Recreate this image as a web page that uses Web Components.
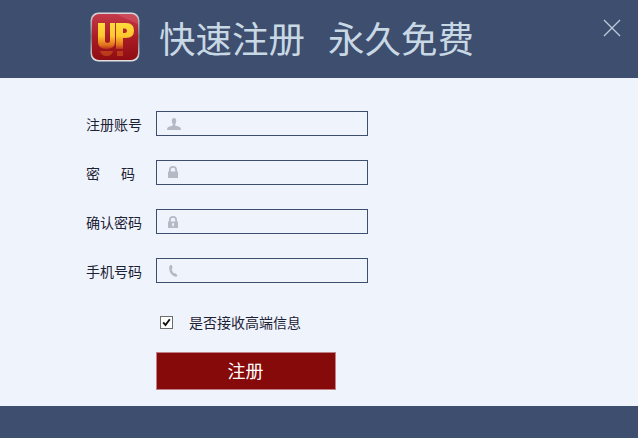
<!DOCTYPE html>
<html lang="zh"><head><meta charset="utf-8">
<style>
html,body{margin:0;padding:0;width:638px;height:438px;overflow:hidden;background:#eff3fb;font-family:"Noto Sans CJK SC","Liberation Sans",sans-serif}
</style></head><body>
<reg-app></reg-app>
<script>
class RegHeader extends HTMLElement{constructor(){super();this.attachShadow({mode:'open'}).innerHTML=`
<style>
:host{display:flex;flex:none;align-items:center;height:78px;background:#3e4e6e;padding-left:90px;box-sizing:border-box;position:relative}
.t{display:flex;gap:23px;margin-left:19px;font-size:36.5px;line-height:50px;color:#c8d8e4;margin-top:-3px}
svg{display:block}
.x{position:absolute;left:603px;top:19px}
.logo{margin-top:-4px}
</style>
<svg class="logo" width="50" height="50" viewBox="0 0 50 50">
<defs>
<linearGradient id="b" x1="0" y1="0" x2="0" y2="1"><stop offset="0" stop-color="#c43a4a"/><stop offset=".5" stop-color="#ab1c26"/><stop offset="1" stop-color="#8e0c12"/></linearGradient>
<linearGradient id="r" x1="0" y1="0" x2="0" y2="1"><stop offset="0" stop-color="#d8d8dc"/><stop offset=".5" stop-color="#77777c"/><stop offset="1" stop-color="#e4e4e6"/></linearGradient>
<linearGradient id="y" gradientUnits="userSpaceOnUse" x1="0" y1="11" x2="0" y2="37"><stop offset="0" stop-color="#ffdc3c"/><stop offset=".5" stop-color="#fcc82e"/><stop offset=".85" stop-color="#e2701e"/><stop offset="1" stop-color="#b8301c"/></linearGradient>
</defs>
<rect x=".5" y=".5" width="49" height="49" rx="8" fill="url(#r)"/>
<rect x="2" y="2" width="46" height="46" rx="7" fill="url(#b)"/>
<path d="M9 2h32a7 7 0 0 1 7 7v3L26 2z" fill="#d96a78" opacity=".4"/>
<path d="M8 11h7v18q0 2 2.500 2t2.500-2V11h5v19q0 7-8.500 7T8 30z" fill="url(#y)"/>
<path d="M26 11h10q8 0 8 7.500T36 26h-3v11h-7zM33 16.500v4.500h1.500q2.500 0 2.500-2.250t-2.500-2.250z" fill="url(#y)" fill-rule="evenodd"/>
<path d="M10 39h13q-1 5-6.500 5t-6.500-5zM27 39h6v5h-6z" fill="#e0641e" opacity=".5"/>
</svg>
<div class="t"><span>快速注册</span><span>永久免费</span></div>
<svg class="x" width="18" height="18" viewBox="0 0 18 18"><path d="M1 1L17 17M17 1L1 17" stroke="#bccbdc" stroke-width="1.300" fill="none"/></svg>`}}
customElements.define('reg-header',RegHeader);

const ICONS={
user:'<path d="M8 2q2.200 0 2.200 2.800 0 2-1 3.400v1.300l4.500 1.600q1.300.5 1.300 2.900H1q0-2.400 1.300-2.900l4.500-1.600V8.200q-1-1.400-1-3.400Q5.800 2 8 2z"/>',
lock:'<path fill-rule="evenodd" d="M3 6.500V5a4 4 0 0 1 8 0v1.500h1V13H2V6.500zM4.800 6.500h4.400V5a2.200 2.200 0 0 0-4.400 0z"/>',
lockh:'<path fill-rule="evenodd" d="M3 7.500V6a4 4 0 0 1 8 0v1.500h1V14H2V7.500zM4.800 7.500h4.400V6a2.200 2.200 0 0 0-4.400 0zM7 9a1.100 1.100 0 0 0-.6 2v1.500h1.200V11A1.100 1.100 0 0 0 7 9z"/>',
phone:'<path d="M4.200 2L5.800 2l.8 3-1 .9q.3 2.500 2.300 4.600l1.200-.5L11.500 12.200 10.500 13.800Q8 14 5.600 11.400T3.100 5.200Q3.100 3.200 4.200 2z"/>'};
class RegField extends HTMLElement{constructor(){super();const a=this.getAttribute('icon');this.attachShadow({mode:'open'}).innerHTML=`
<style>
:host{display:flex;align-items:center;height:25px}
.l{width:56px;margin-right:14px;font-size:14px;line-height:20px;color:#1c2236;display:flex;justify-content:flex-start;padding-top:1px}
.b{width:212px;height:25px;box-sizing:border-box;border:1px solid #3e4e6e;display:flex;align-items:center;padding-left:9px;background:#eff3fb}
svg{display:block;fill:#b5b9c6}
</style>
<div class="l"><slot></slot></div>
<div class="b"><svg width="16" height="15" viewBox="0 0 16 15">${ICONS[a]}</svg></div>`}}
customElements.define('reg-field',RegField);

class RegCheck extends HTMLElement{constructor(){super();this.attachShadow({mode:'open'}).innerHTML=`
<style>
:host{display:flex;align-items:center;height:13px;margin-left:4px}
.c{width:13px;height:13px;box-sizing:border-box;border:1px solid #6d6d6d;background:#fff;margin-right:16px}
svg{display:block}
span{font-size:14px;line-height:18px;color:#1c2236;margin-top:-2px}
</style>
<div class="c"><svg width="11" height="11" viewBox="0 0 11 11"><path d="M2.200 5.300L4.500 8 8.800 2.200" stroke="#111" stroke-width="1.900" fill="none"/></svg></div>
<span><slot></slot></span>`}}
customElements.define('reg-check',RegCheck);

class RegButton extends HTMLElement{constructor(){super();this.attachShadow({mode:'open'}).innerHTML=`
<style>
:host{display:flex;align-items:center;justify-content:center;width:180px;height:38px;box-sizing:border-box;background:#860a0a;border:1px solid #c08088;color:#fff;font-size:18px;padding:0 1px 3px 0}
</style><slot></slot>`}}
customElements.define('reg-button',RegButton);

class RegApp extends HTMLElement{constructor(){super();this.attachShadow({mode:'open'}).innerHTML=`
<style>
:host{display:flex;flex-direction:column;width:638px;height:438px;background:#eff3fb}
main{flex:1;padding:33px 0 0 86px;display:flex;flex-direction:column}
.fields{display:flex;flex-direction:column;gap:24px}
.lower{margin-left:70px;display:flex;flex-direction:column}
reg-check{margin-top:33px}
reg-button{margin-top:23px}
footer{flex:none;height:32px;background:#3e4e6e}
.sp{display:flex;justify-content:space-between;width:49px}
</style>
<reg-header></reg-header>
<main>
<div class="fields">
<reg-field icon="user">注册账号</reg-field>
<reg-field icon="lock"><div class="sp"><span>密</span><span>码</span></div></reg-field>
<reg-field icon="lockh">确认密码</reg-field>
<reg-field icon="phone">手机号码</reg-field>
</div>
<div class="lower">
<reg-check>是否接收高端信息</reg-check>
<reg-button>注册</reg-button>
</div>
</main>
<footer></footer>`}}
customElements.define('reg-app',RegApp);
</script>
</body></html>
